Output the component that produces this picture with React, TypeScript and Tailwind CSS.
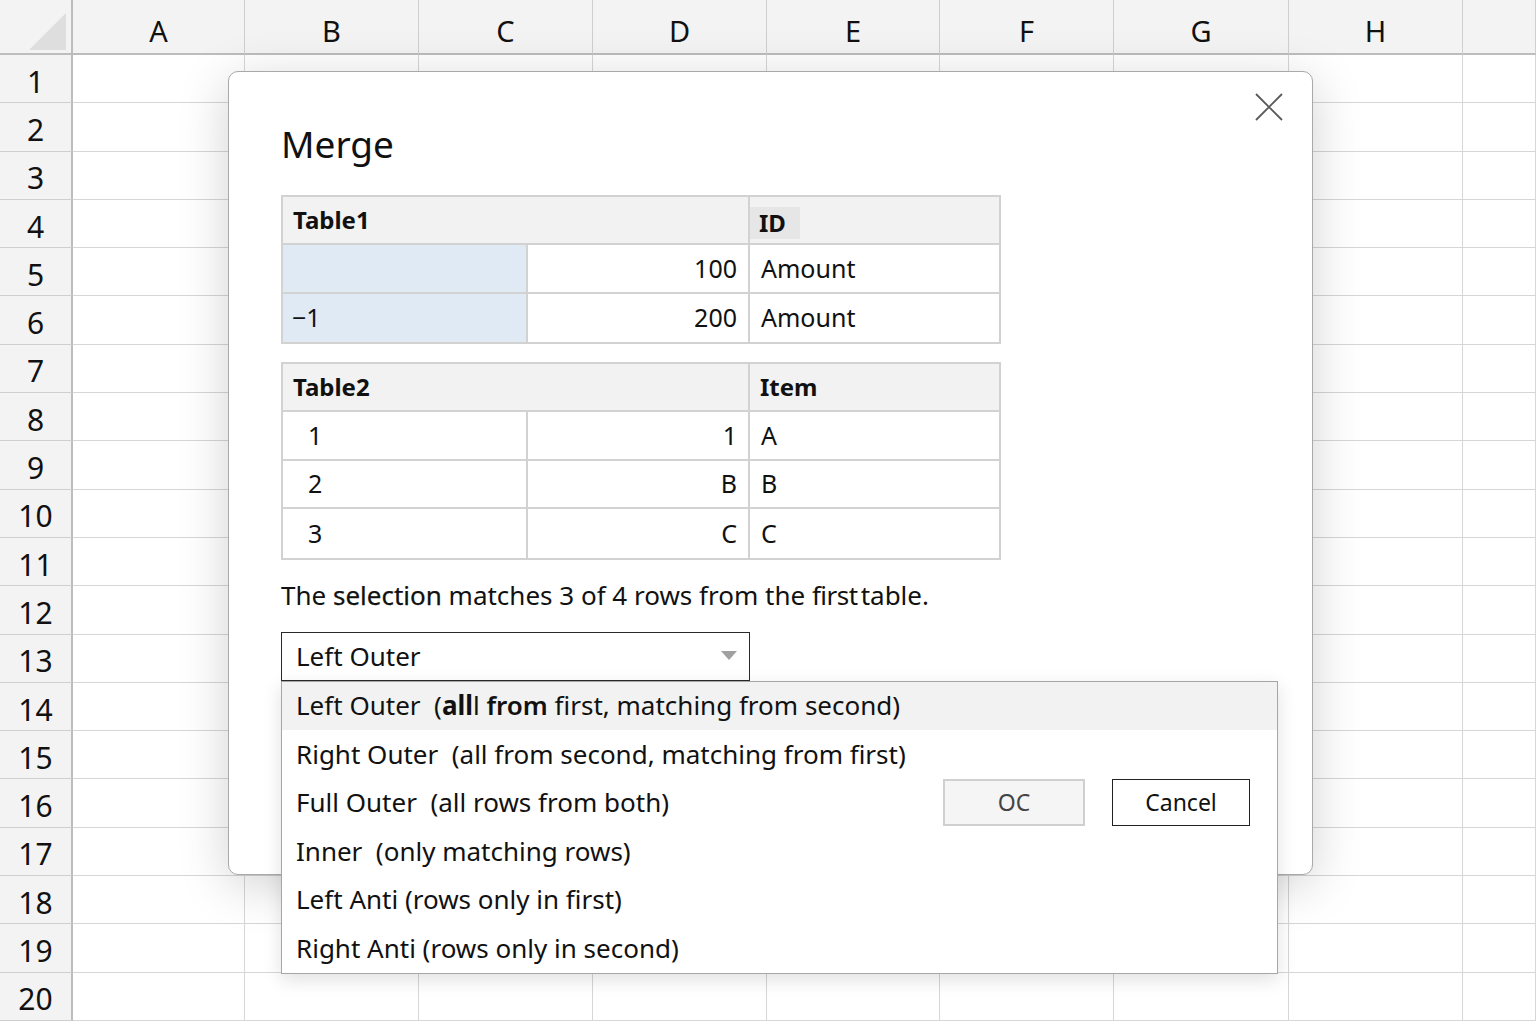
import React from 'react';

const COLS = ['A', 'B', 'C', 'D', 'E', 'F', 'G', 'H', ''];
const ROWS = Array.from({ length: 20 }, (_, i) => i + 1);

const JOIN_KINDS = [
  'Right Outer  (all from second, matching from first)',
  'Full Outer  (all rows from both)',
  'Inner  (only matching rows)',
  'Left Anti (rows only in first)',
  'Right Anti (rows only in second)',
];

function Sheet() {
  return (
    <div className="grid grid-cols-[73px_172px_174px_174px_174px_173px_174px_175px_174px_1fr] grid-rows-[55px_repeat(20,48.3px)]">
      {/* corner */}
      <div className="bg-[#f3f3f3] border-r-2 border-b-2 border-[#bdbdbd] flex items-end justify-end pr-[4px] pb-[2px]">
        <svg width="38" height="38" viewBox="0 0 38 38">
          <polygon points="0,37 37,37 37,0" fill="#dedede" />
        </svg>
      </div>
      {COLS.map((c, i) => (
        <div
          key={c + i}
          className="bg-[#f3f3f3] border-b-2 border-r border-b-[#bdbdbd] border-r-[#cfcfcf] flex items-center justify-center text-[29px] text-[#111] pt-[8px]"
        >
          {c}
        </div>
      ))}
      {ROWS.map((r) => (
        <React.Fragment key={r}>
          <div className="bg-[#f3f3f3] border-r-2 border-b border-r-[#bdbdbd] border-b-[#cfcfcf] flex items-center justify-center text-[30px] text-[#111] pt-[5px]">
            {r}
          </div>
          {COLS.map((c, i) => (
            <div key={c + i} className="bg-white border-r border-b border-[#d6d6d6]" />
          ))}
        </React.Fragment>
      ))}
    </div>
  );
}

function CloseIcon() {
  return (
    <svg width="30" height="30" viewBox="0 0 30 30" fill="none" stroke="#5a5a5a" strokeWidth="1.8">
      <path d="M2 2 L28 28 M28 2 L2 28" />
    </svg>
  );
}

function Table1() {
  return (
    <div className="w-[720px] border-2 border-[#d2d2d2] text-[25px] text-[#111]">
      <div className="flex h-[48px] bg-[#f2f2f2] border-b-2 border-[#d2d2d2]">
        <div className="w-[467px] flex items-center pl-[10px] text-[24px] font-bold border-r-2 border-[#d2d2d2]">Table1</div>
        <div className="flex-1 flex items-start pt-[10px]">
          <span className="bg-[#e6e6e6] pl-[9px] pr-[14px] h-[32px] flex items-center text-[24px] font-bold">ID</span>
        </div>
      </div>
      {[
        ['', '100'],
        ['\u22121', '200'],
      ].map(([a, b], i) => (
        <div key={i} className={`flex h-[48.5px] ${i === 0 ? 'border-b-2 border-[#d2d2d2]' : ''}`}>
          <div className="w-[245px] bg-[#dfeaf5] flex items-center pl-[9px] border-r-2 border-[#d2d2d2]">{a}</div>
          <div className="w-[222px] flex items-center justify-end pr-[11px] border-r-2 border-[#d2d2d2]">{b}</div>
          <div className="flex-1 flex items-center pl-[11px]">Amount</div>
        </div>
      ))}
    </div>
  );
}

function Table2() {
  const rows = [
    ['1', '1', 'A'],
    ['2', 'B', 'B'],
    ['3', 'C', 'C'],
  ];
  return (
    <div className="w-[720px] border-2 border-[#d2d2d2] text-[25px] text-[#111]">
      <div className="flex h-[48px] bg-[#f2f2f2] border-b-2 border-[#d2d2d2]">
        <div className="w-[467px] flex items-center pl-[10px] text-[24px] font-bold border-r-2 border-[#d2d2d2]">Table2</div>
        <div className="flex-1 flex items-center pl-[10px] text-[24px] font-bold">Item</div>
      </div>
      {rows.map(([a, b, c], i) => (
        <div key={i} className={`flex h-[48.5px] ${i < 2 ? 'border-b-2 border-[#d2d2d2]' : ''}`}>
          <div className="w-[245px] flex items-center pl-[25px] border-r-2 border-[#d2d2d2]">{a}</div>
          <div className="w-[222px] flex items-center justify-end pr-[11px] border-r-2 border-[#d2d2d2]">{b}</div>
          <div className="flex-1 flex items-center pl-[11px]">{c}</div>
        </div>
      ))}
    </div>
  );
}

function JoinSelect() {
  return (
    <div className="relative w-[469px]">
      <div className="h-[49px] border-[1.5px] border-[#2a2a2a] bg-white flex items-center justify-between pl-[14px] pr-[12px] text-[26px] text-[#111]">
        <span>Left Outer</span>
        <svg width="16" height="10" viewBox="0 0 16 10">
          <polygon points="0,0 16,0 8,9" fill="#a0a0a0" />
        </svg>
      </div>
      <div className="absolute left-0 top-full z-10 w-[997px] bg-white border border-[#a6a6a6] shadow-[0_6px_18px_rgba(0,0,0,0.12)] text-[26px] text-[#111]">
        <div className="h-[48.5px] bg-[#f2f2f2] flex items-center pl-[14px] whitespace-pre">
          Left Outer  (<span className="font-bold">all</span>l <span className="font-semibold">from</span> first, matching from second)
        </div>
        {JOIN_KINDS.map((k) => (
          <div key={k} className="h-[48.5px] flex items-center pl-[14px] whitespace-pre">
            {k}
          </div>
        ))}
      </div>
    </div>
  );
}

export default function App() {
  return (
    <div className="relative w-[1536px] h-[1024px] overflow-hidden bg-white" style={{ fontFamily: '"Noto Sans", "Open Sans", sans-serif' }}>
      <Sheet />

      {/* Merge dialog */}
      <div className="absolute left-[228px] top-[71px] w-[1085px] h-[804px] bg-white rounded-[10px] border border-[#a9a9a9] shadow-[0_10px_50px_rgba(0,0,0,0.18)] flex flex-col pl-[52px] pr-[62px] pt-[46px]">
        <button className="absolute right-[28px] top-[20px]">
          <CloseIcon />
        </button>

        <h1 className="text-[37px] leading-[52px] text-[#111]">Merge</h1>

        <div className="mt-[25px] flex flex-col gap-[18px]">
          <Table1 />
          <Table2 />
        </div>

        <p className="mt-[18px] text-[26px] leading-[34px] text-[#111]">
          The <span className="[-webkit-text-stroke:0.25px_#111]">selection</span> matches 3 of 4 rows from the{' '}
          <span className="tracking-[-0.5px]">first</span>
          <span className="ml-[3px]">table.</span>
        </p>

        <div className="mt-[20px]">
          <JoinSelect />
        </div>

        <div className="relative z-20 mt-[98px] flex justify-end gap-[27px]">
          <button className="w-[142px] h-[47px] bg-[#f5f5f5] border-2 border-[#d0d0d0] text-[23px] text-[#444]">OC</button>
          <button className="w-[138px] h-[47px] bg-white border-[1.5px] border-[#222] text-[23px] text-[#111]">Cancel</button>
        </div>
      </div>
    </div>
  );
}
